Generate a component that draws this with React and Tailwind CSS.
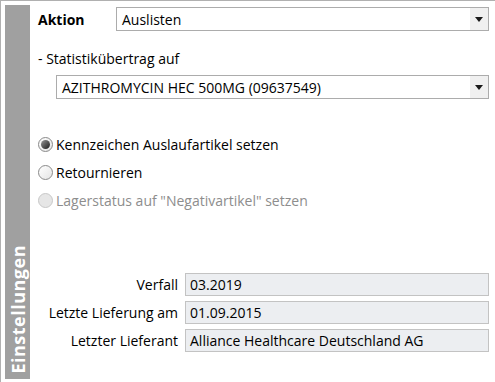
import React from 'react';

function Select({ value, className }) {
  return (
    <div className={`flex h-[24px] items-stretch border border-[#acacac] bg-white ${className}`}>
      <div className="flex flex-1 items-center truncate pl-[5px] text-[14px] text-black">{value}</div>
      <div className="flex w-[18px] items-center justify-center bg-[#f0f0f0]">
        <svg width="8" height="5" viewBox="0 0 8 5">
          <path d="M0 0H8L4 5Z" fill="#1a1a1a" />
        </svg>
      </div>
    </div>
  );
}

function Radio({ label, checked, disabled }) {
  return (
    <div className="flex h-[28px] items-center">
      <div
        className={`relative flex h-[15px] w-[15px] items-center justify-center rounded-full border ${
          disabled ? 'border-[#c8c8c8] bg-[#e6e6e6]' : 'border-[#8a8a8a] bg-gradient-to-br from-[#ffffff] to-[#e4e4e4]'
        }`}
      >
        {checked && <div className="h-[9px] w-[9px] rounded-full bg-gradient-to-br from-[#9a9a9a] to-[#1e1e1e]" />}
      </div>
      <span className={`ml-[3px] text-[14px] ${disabled ? 'text-[#8d8d8d]' : 'text-black'}`}>{label}</span>
    </div>
  );
}

function Field({ label, value }) {
  return (
    <div className="flex items-center">
      <div className="w-[147px] pr-[7px] text-right text-[14px] text-black">{label}</div>
      <div className="flex h-[23px] flex-1 items-center border border-[#c3c3c3] bg-[#eceef1] pl-[4px] text-[14px] text-black">
        {value}
      </div>
    </div>
  );
}

export default function App() {
  return (
    <div
      className="h-[382px] w-[495px] bg-white"
      style={{ fontFamily: '"Open Sans", "Noto Sans", sans-serif' }}
    >
      <div className="flex h-full border-l border-t border-[#b0b0b0] pl-[4px] pt-[4px]">
        <div className="flex h-[374px] w-[25px] items-end justify-center bg-[#a0a0a0] pb-[5px]">
          <span
            className="text-[18px] font-bold leading-none tracking-[0.5px] text-white"
            style={{ writingMode: 'vertical-rl', transform: 'rotate(180deg)' }}
          >
            Einstellungen
          </span>
        </div>
        <div className="flex flex-1 flex-col pl-[8px] pr-[6px]">
          <div className="mt-[2px] flex items-center">
            <span className="w-[78px] text-[14px] font-bold text-black">Aktion</span>
            <Select value="Auslisten" className="flex-1" />
          </div>
          <div className="mt-[17px] text-[14px] text-black">- Statistikübertrag auf</div>
          <Select value="AZITHROMYCIN HEC 500MG (09637549)" className="ml-[18px] mt-[6px]" />
          <div className="mt-[31px] flex flex-col">
            <Radio label="Kennzeichen Auslaufartikel setzen" checked />
            <Radio label="Retournieren" />
            <Radio label="Lagerstatus auf &quot;Negativartikel&quot; setzen" disabled />
          </div>
          <div className="mt-[59px] flex flex-col gap-[5px]">
            <Field label="Verfall" value="03.2019" />
            <Field label="Letzte Lieferung am" value="01.09.2015" />
            <Field label="Letzter Lieferant" value="Alliance Healthcare Deutschland AG" />
          </div>
        </div>
      </div>
    </div>
  );
}
